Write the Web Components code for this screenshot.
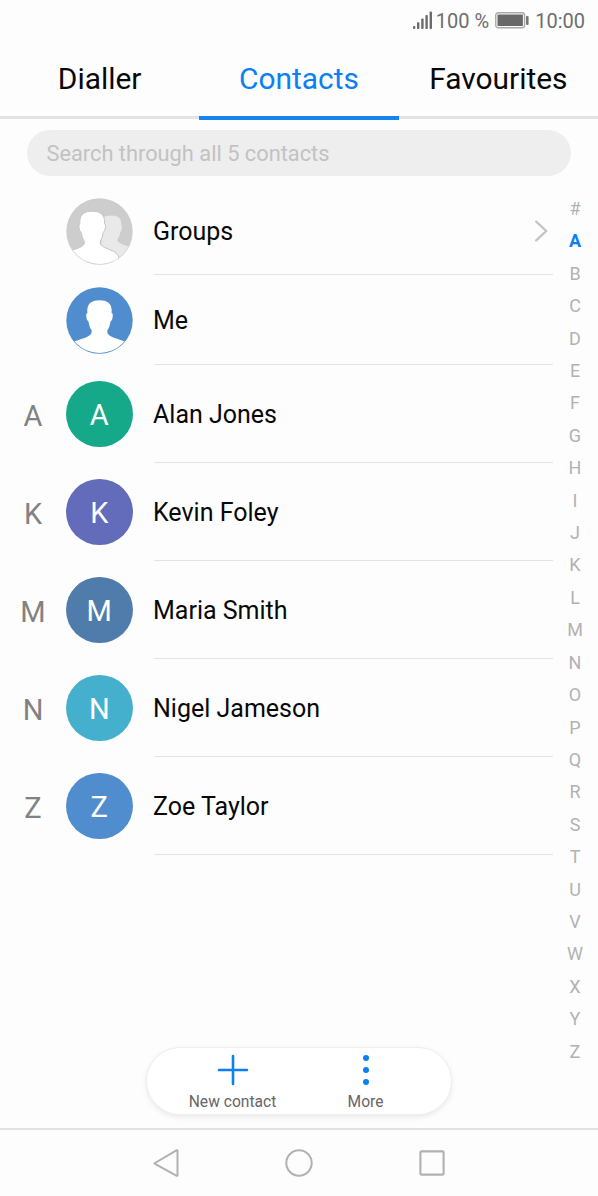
<!DOCTYPE html>
<html lang="en"><head><meta charset="utf-8"><title>Contacts</title>
<style>html,body{margin:0;background:#fdfdfd}body{font-family:Roboto,"Liberation Sans",sans-serif;width:598px;height:1196px;overflow:hidden}</style></head>
<body><contacts-app></contacts-app>
<script>
const define=(name,html,init)=>customElements.define(name,class extends HTMLElement{
  constructor(){super();this.attachShadow({mode:'open'})}
  connectedCallback(){this.shadowRoot.innerHTML=html;if(init)init(this,this.shadowRoot)}
});

define('status-bar',`<style>
:host{display:flex;height:40px;box-sizing:border-box;padding-right:13px;justify-content:flex-end;align-items:center;color:#6d6d6d;font-size:20px;line-height:40px;white-space:pre}
svg{display:block}.pct{margin:1px 6px 0 4px}.time{margin:1px 0 0 6px}
</style>
<svg width="19" height="20" viewBox="0 0 19 20" fill="#6b6b6b"><rect x="0" y="16" width="2.3" height="3" rx=".8"/><rect x="4" y="12.3" width="2.4" height="6.7" rx=".8"/><rect x="8.2" y="8.5" width="2.4" height="10.5" rx=".8"/><rect x="12.4" y="5" width="2.4" height="14" rx=".8"/><rect x="16.6" y="1.4" width="2.4" height="17.6" rx=".8"/></svg>
<span class="pct">100 %</span>
<svg width="34" height="17" viewBox="0 0 34 17"><rect x=".75" y=".75" width="28.8" height="15" rx="2.6" fill="none" stroke="#a9a9a9" stroke-width="1.4"/><rect x="2.5" y="2.5" width="25.4" height="11.5" rx=".5" fill="#686868"/><rect x="31" y="4" width="2.6" height="9" rx="1" fill="#777"/></svg>
<span class="time">10:00</span>`);

define('tab-item',`<style>
:host{flex:1;display:flex;justify-content:center;box-sizing:border-box;height:80px;border-bottom:4px solid transparent;background:linear-gradient(#e3e3e3,#e3e3e3) 0 76px/100% 3px no-repeat border-box;color:#080808;font-size:29.9px;line-height:78px}
:host([active]){color:#0b80f3;background:none;border-color:#1683ee}
</style><slot></slot>`);
define('tab-bar',`<style>:host{display:flex;height:80px}</style><slot></slot>`);

define('search-field',`<style>
:host{display:block;box-sizing:border-box;margin:10px 27px 0 26.5px;height:46px;border-radius:23px;background:#eee;color:#c2c2c2;padding-left:20px;font-size:21.8px;line-height:47px}
</style><slot></slot>`);

define('person-icon',`<style>:host{display:block;width:67px;height:67px}svg{display:block}</style>
<svg width="67" height="67" viewBox="0 0 67 67"></svg>`,(el,r)=>{
 const path='M21.4 26C20.5 17 25 13.2 33.5 13.2S46.5 17 45.6 26Q46.8 26.1 46.8 28Q46.8 33 44.5 34.5Q43.5 41 41.4 43V46Q43.5 50 52.5 52.3Q60 54.5 70 60V75H-3V60Q7 54.5 14.5 52.3Q23.5 50 25.6 46V43Q23.5 41 22.5 34.5Q20.2 33 20.2 28Q20.2 26.1 21.4 26Z';
 const group=el.hasAttribute('group');
 r.querySelector('svg').innerHTML='<defs><clipPath id="c"><circle cx="33.5" cy="33.5" r="32.5"/></clipPath></defs><circle cx="33.5" cy="33.5" r="33.2" fill="'+(group?'#cdcdcd':'#508dce')+'"/><g clip-path="url(#c)">'+(group?
 '<path d="M37 19Q41 17.5 46 17.5Q56 17.5 55.2 27Q56 27.5 55.8 30Q55.4 33 54.5 34Q53.5 39 51.5 41V43Q55 46.5 63 48.5V68H34Z" fill="#e9e9e9"/><path d="M13.9 26C13 17 17.5 13.2 26.2 13.2S39.3 17 38.5 26Q39.7 26.1 39.6 28Q39.4 33 37.2 34.5Q36.2 41 34.3 43V46Q37 49.8 44 51.8Q52 54.5 53.5 61V68H-2V56Q2 53.5 7 51.8Q16.2 49.5 18.2 46V43Q16.2 41 15.2 34.5Q12.9 33 12.9 28Q12.9 26.1 13.9 26Z" fill="#fff" stroke="#c6c6c6" stroke-width="1"/>'
 :'<path d="'+path+'" fill="#fff"/>')+'</g>';
});

define('letter-avatar',`<style>
:host{display:flex;width:66.5px;height:66.5px;border-radius:50%;align-items:center;justify-content:center;color:#fff;font-size:29px;line-height:34px}
span{padding-top:2px}</style><span><slot></slot></span>`,el=>{el.style.background=el.getAttribute('color')});

define('contact-row',`<style>
:host{display:grid;grid-template-columns:66px 88px 399px;height:98px}
.section{display:flex;align-items:center;justify-content:center;color:#828282;font-size:29px;padding-top:3px}
.avatar{display:flex;align-items:center}
.main{display:flex;align-items:center;justify-content:space-between;box-sizing:border-box;border-bottom:1px solid #e3e3e3;color:#080808;font-size:25px}
.name{margin-left:-1px;padding-top:1px;white-space:nowrap}
:host([compact]){height:90px}
:host([first]) .avatar,:host([first]) .main{padding-top:2px}
</style><div class="section"></div><div class="avatar"><slot name="avatar"></slot></div><div class="main"><span class="name"><slot></slot></span><slot name="end"></slot></div>`,(el,r)=>{r.querySelector('.section').textContent=el.getAttribute('section')||''});

define('chevron-icon',`<style>:host{display:block;margin-right:4px}svg{display:block}</style><svg width="15" height="22" viewBox="0 0 15 22" fill="none" stroke="#c4c4c4" stroke-width="2.3" stroke-linecap="round" stroke-linejoin="round"><path d="M2.2 1.6 12.3 11 2.2 20.4"/></svg>`);

define('alphabet-index',`<style>
:host{display:flex;flex-direction:column;width:44px;margin-top:8px}
span{height:32.42px;line-height:32.42px;text-align:center;font-size:18px;color:#b2b2b2}
.on{color:#0b80f3;font-weight:700}</style>`,(el,r)=>{
 for(const c of '#ABCDEFGHIJKLMNOPQRSTUVWXYZ'){const s=document.createElement('span');s.textContent=c;if(c==='A')s.className='on';r.append(s)}
});

define('action-item',`<style>
:host{display:flex;flex-direction:column;align-items:center;width:133px;color:#666;font-size:15.6px;line-height:20px;white-space:nowrap}
svg{display:block;margin:6px 0 6px}</style>
<svg width="32" height="32" viewBox="0 0 32 32"></svg><slot></slot>`,(el,r)=>{
 r.querySelector('svg').innerHTML=el.getAttribute('icon')==='plus'
 ?'<path d="M16 2v28M2 16h28" stroke="#0b80f3" stroke-width="2.6" stroke-linecap="round"/>'
 :'<g fill="#0b80f3"><circle cx="16" cy="3.9" r="3"/><circle cx="16" cy="16" r="3"/><circle cx="16" cy="28" r="3"/></g>';
});
define('action-pill',`<style>
:host{display:flex;justify-content:center;width:304px;height:66px;border-radius:33px;background:#fff;box-shadow:0 0 0 1px #efefef,0 2px 6px rgba(0,0,0,.11)}
</style><slot></slot>`);

define('nav-bar',`<style>
:host{display:flex;box-sizing:border-box;height:68px;border-top:2px solid #e2e2e2;align-items:center;justify-content:center;gap:105px}svg{display:block}</style>
<svg width="28" height="30" viewBox="0 0 28 30"><path d="M3 15 24.8 2.2Q25.5 2 25.5 2.8V27.2Q25.5 28 24.8 27.8L3 15.9Q2.2 15.4 3 15Z" fill="none" stroke="#b1b1b1" stroke-width="2" stroke-linejoin="round"/></svg>
<svg width="28" height="28" viewBox="0 0 28 28"><circle cx="14" cy="14" r="12.7" fill="none" stroke="#b1b1b1" stroke-width="2"/></svg>
<svg width="28" height="28" viewBox="0 0 28 28"><rect x="2.4" y="2.4" width="23.2" height="23.2" rx="1" fill="none" stroke="#b1b1b1" stroke-width="2.1"/></svg>`);

define('contacts-app',`<style>
:host{display:flex;flex-direction:column;width:598px;height:1196px;background:#fdfdfd}
.content{display:flex;flex:1;margin-top:9px;min-height:0}.list{width:553px}
.actions{display:flex;justify-content:center;margin:0 0 14px}
</style>
<status-bar></status-bar>
<tab-bar><tab-item>Dialler</tab-item><tab-item active>Contacts</tab-item><tab-item>Favourites</tab-item></tab-bar>
<search-field>Search through all 5 contacts</search-field>
<div class="content"><div class="list">
<contact-row compact first><person-icon group slot="avatar"></person-icon>Groups<chevron-icon slot="end"></chevron-icon></contact-row>
<contact-row compact><person-icon slot="avatar"></person-icon>Me</contact-row>
<contact-row section="A"><letter-avatar slot="avatar" color="#15a989">A</letter-avatar>Alan Jones</contact-row>
<contact-row section="K"><letter-avatar slot="avatar" color="#626cba">K</letter-avatar>Kevin Foley</contact-row>
<contact-row section="M"><letter-avatar slot="avatar" color="#507cab">M</letter-avatar>Maria Smith</contact-row>
<contact-row section="N"><letter-avatar slot="avatar" color="#44b0ce">N</letter-avatar>Nigel Jameson</contact-row>
<contact-row section="Z"><letter-avatar slot="avatar" color="#508dce">Z</letter-avatar>Zoe Taylor</contact-row>
</div><alphabet-index></alphabet-index></div>
<div class="actions"><action-pill><action-item icon="plus">New contact</action-item><action-item icon="more">More</action-item></action-pill></div>
<nav-bar></nav-bar>`);
</script></body></html>
